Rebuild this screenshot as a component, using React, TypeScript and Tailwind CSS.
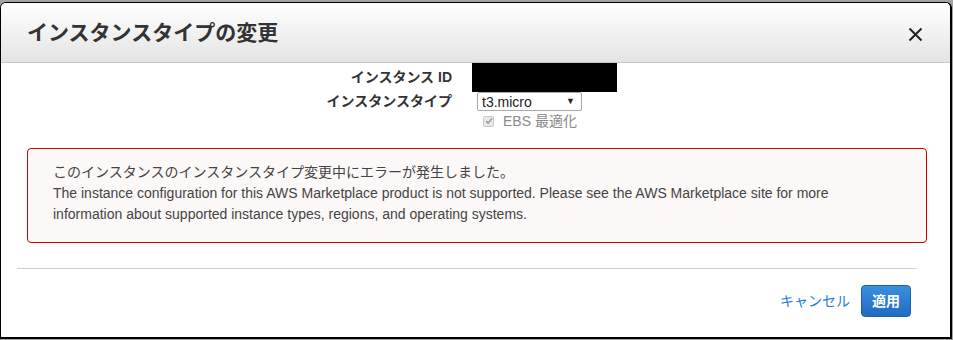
import React from 'react';

const font = { fontFamily: '"Liberation Sans", "Noto Sans CJK JP", sans-serif' };

const App: React.FC = () => {
  return (
    <div className="w-[953px] h-[340px] bg-[#a3a3a3] pt-[2px] overflow-hidden" style={font}>
      <div className="w-[952px] h-[337px] bg-white border border-black border-r-2 border-b-2 rounded-t-[6px] overflow-hidden flex flex-col">
        {/* Header */}
        <div className="h-[60px] shrink-0 flex items-center justify-between pl-[26px] pr-[27px] border-b border-[#c8c8c8] bg-gradient-to-b from-white to-[#e4e4e4]">
          <h2 className="text-[21px] font-bold text-[#333]">インスタンスタイプの変更</h2>
          <svg width="15" height="15" viewBox="0 0 15 15" className="mt-[3px]">
            <path d="M1.5 1.5 L13.5 13.5 M13.5 1.5 L1.5 13.5" stroke="#222" strokeWidth="2" />
          </svg>
        </div>

        {/* Form rows */}
        <div className="flex flex-col">
          <div className="flex h-[29px]">
            <div className="w-[451px] text-right text-[14px] font-bold text-[#333] pt-[4px]">インスタンス ID</div>
            <div className="ml-[20px] w-[145px] h-[29px] bg-black" />
          </div>
          <div className="flex h-[19px] items-center">
            <div className="w-[451px] text-right text-[14px] font-bold text-[#333]">インスタンスタイプ</div>
            <div className="ml-[25px] w-[105px] h-[19px] border border-[#a9a9a9] rounded-[2px] flex items-center justify-between pl-[4px] pr-[6px] text-[14px] text-[#222] leading-none">
              <span>t3.micro</span>
              <span className="text-[9px]">▼</span>
            </div>
          </div>
          <div className="flex items-center h-[20px] pl-[482px]">
            <span className="w-[11px] h-[11px] rounded-[2px] border border-[#c8c8c8] bg-[#e9e9e9] flex items-center justify-center">
              <svg width="8" height="8" viewBox="0 0 8 8">
                <path d="M1 4.2 L3.1 6.2 L7 1.6" stroke="#9a9a9a" strokeWidth="1.6" fill="none" />
              </svg>
            </span>
            <span className="ml-[9px] text-[14px] text-[#8a8a8a]">EBS 最適化</span>
          </div>
        </div>

        {/* Error */}
        <div className="mt-[17px] ml-[26px] w-[900px] h-[95px] border border-[#d40000] rounded-[4px] bg-[#fcf8f8] pl-[25px] pt-[13px] text-[14px] leading-[21px] text-[#444]">
          <div>このインスタンスのインスタンスタイプ変更中にエラーが発生しました。</div>
          <div>
            The instance configuration for this AWS Marketplace product is not supported. Please see the AWS Marketplace site for more
            <br />
            information about supported instance types, regions, and operating systems.
          </div>
        </div>

        {/* Divider */}
        <div className="mt-[25px] ml-[16px] w-[900px] h-px bg-[#cfcfcf]" />

        {/* Footer */}
        <div className="flex items-center justify-end pr-[39px] mt-[16px]">
          <span className="text-[14px] text-[#1f7dd8] mr-[11px]">キャンセル</span>
          <button className="w-[50px] h-[32px] rounded-[4px] border border-[#1d5fa8] bg-gradient-to-b from-[#3b8fdc] to-[#1f6cc4] text-white text-[14px] font-bold">
            適用
          </button>
        </div>
      </div>
    </div>
  );
};

export default App;
